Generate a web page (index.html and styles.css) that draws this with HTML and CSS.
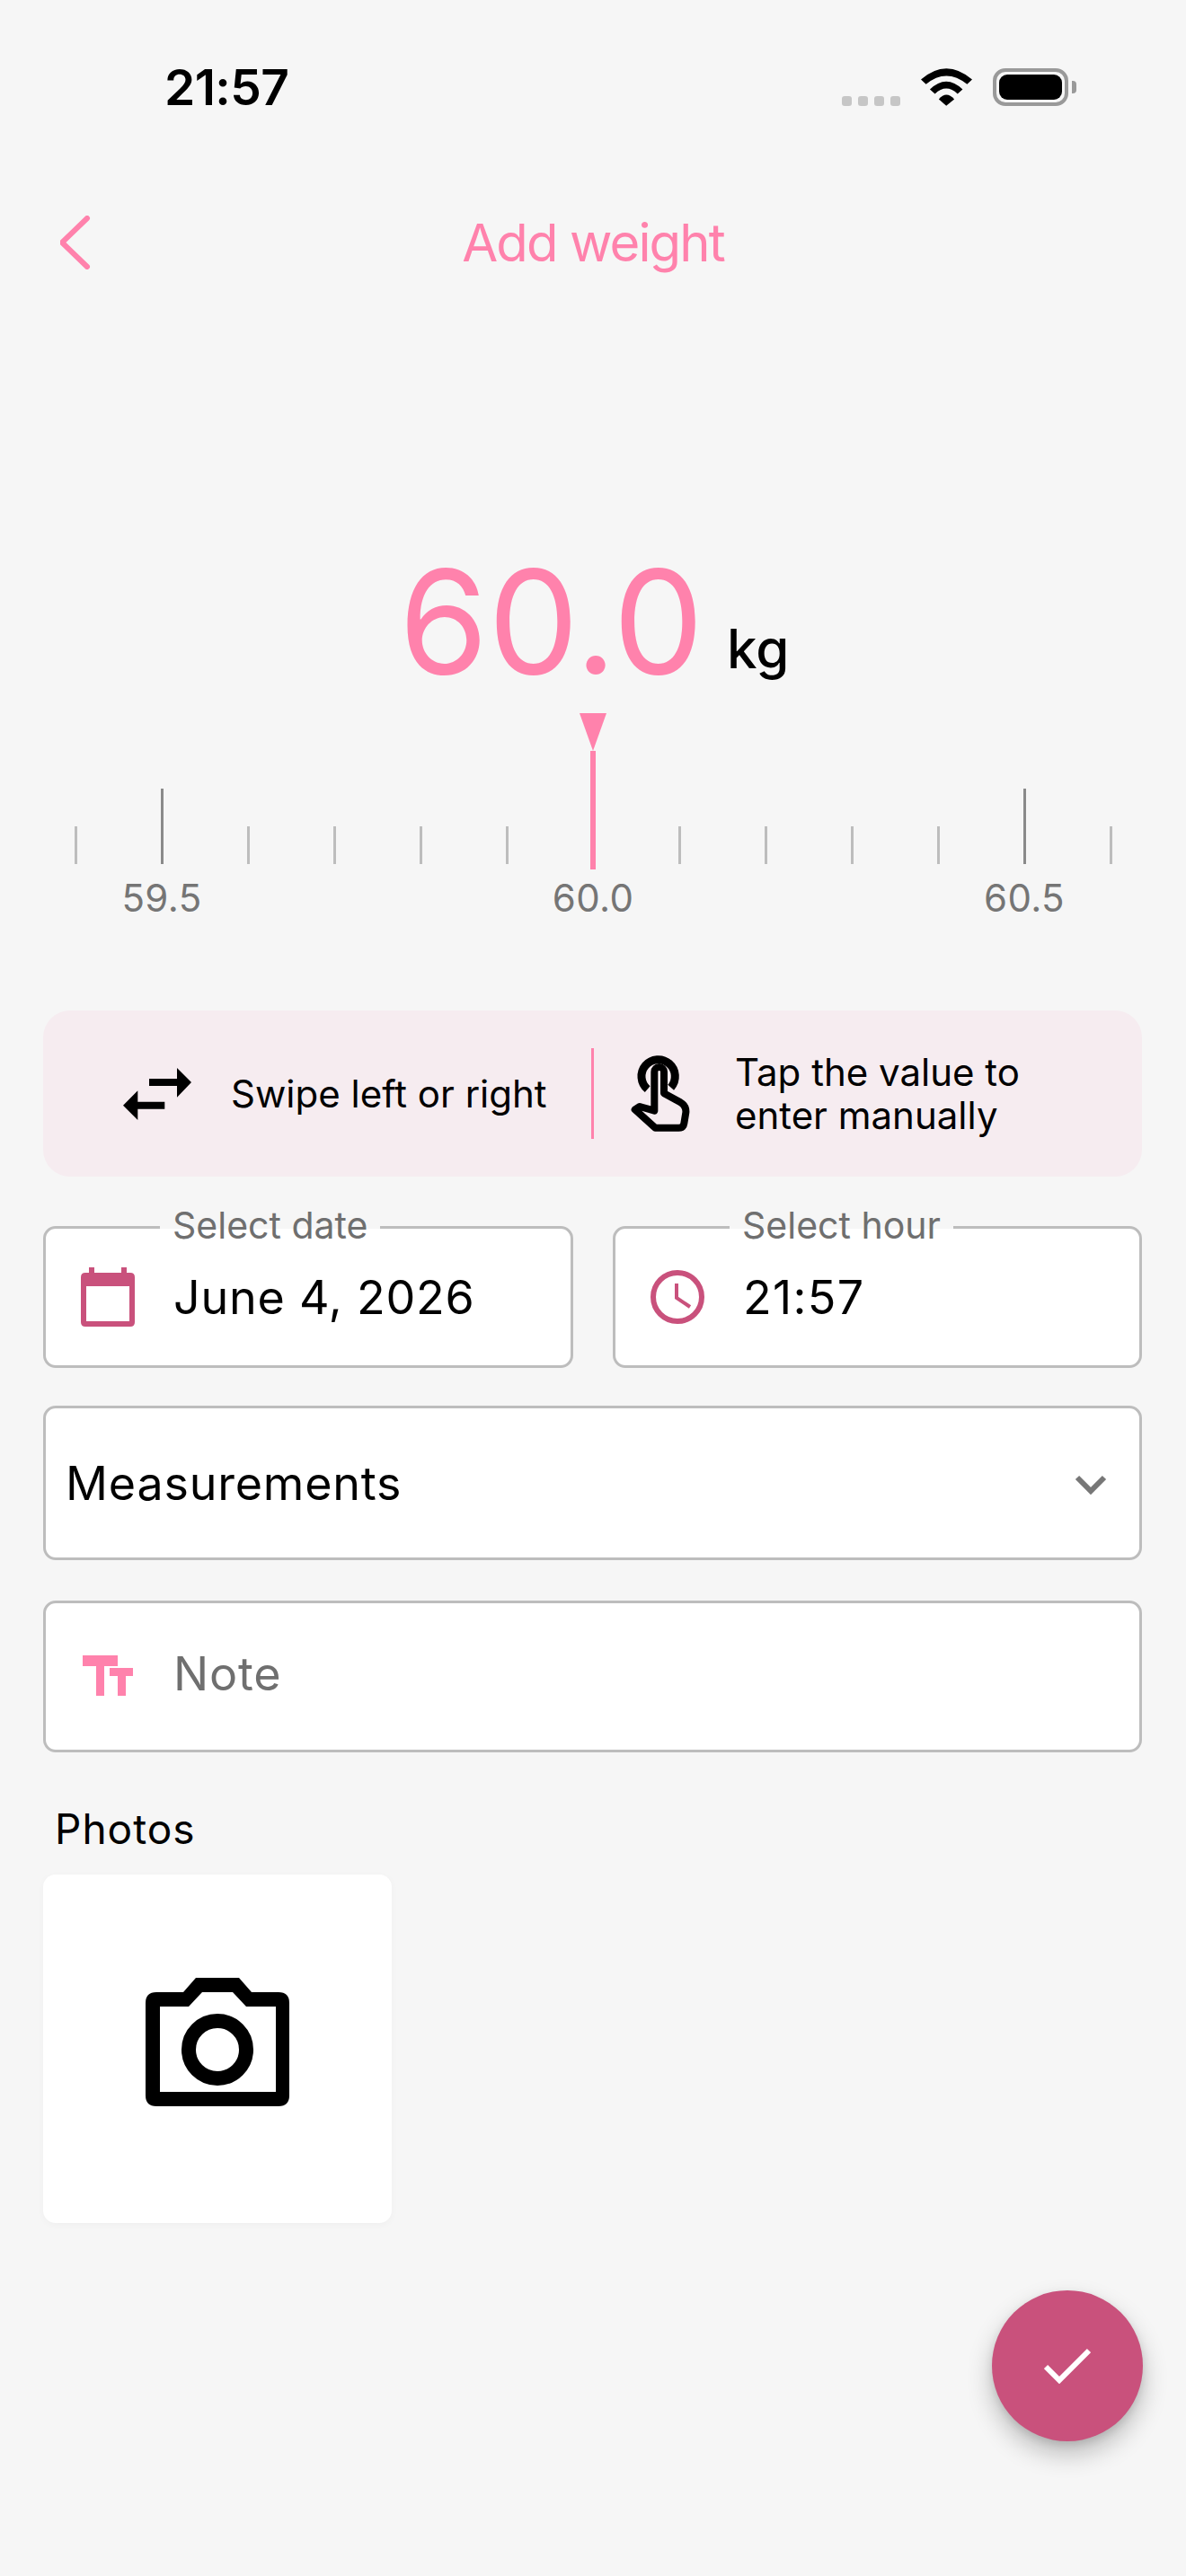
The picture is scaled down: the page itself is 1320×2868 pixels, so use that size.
FILE: index.html
```html
<!DOCTYPE html>
<html lang="en">
<head>
<meta charset="utf-8">
<title>Add weight</title>
<link rel="stylesheet" href="styles.css">
</head>
<body>
<div class="screen">
  <header class="status">
    <span class="clock">21:57</span>
    <div class="status-icons">
      <div class="signal"><i></i><i></i><i></i><i></i></div>
      <svg class="wifi" viewBox="375 75 172 125"><path d="M375 112Q460 38 547 112L530 128Q460 72 392 128Z"/><path d="M405 145Q460 92 515 145L498 160Q460 124 422 160Z"/><path d="M435 178Q460 148 487 178L460 200Z"/></svg>
      <div class="battery"><div class="battery-fill"></div></div>
      <div class="battery-nub"></div>
    </div>
  </header>

  <nav class="nav">
    <svg class="back" viewBox="0 0 34 60"><path d="M30 3 2 30 30 57"/></svg>
    <h1 class="title">Add weight</h1>
    <span></span>
  </nav>

  <section class="reading">
    <span class="value">60.0</span>
    <span class="unit">kg</span>
  </section>
  <div class="pointer"></div>
  <section class="ruler">
    <i class="tick"></i><i class="tick major"></i><i class="tick"></i><i class="tick"></i><i class="tick"></i><i class="tick"></i><i class="tick current"></i><i class="tick"></i><i class="tick"></i><i class="tick"></i><i class="tick"></i><i class="tick major"></i><i class="tick"></i>
    <span class="ruler-label col-2">59.5</span>
    <span class="ruler-label col-7">60.0</span>
    <span class="ruler-label col-12">60.5</span>
  </section>

  <main class="form">
    <div class="tips">
      <div class="tip tip-swipe">
        <svg class="icon-swap" viewBox="0 0 76 60"><path d="M29 13H60V1L76 17 60 33.7V21H29Z"/><path d="M0 42.7 16.3 26.3V38.7H46.3V46.7H16.3V59Z"/></svg>
        <span>Swipe left or right</span>
      </div>
      <div class="tip tip-tap">
        <svg class="icon-tap" viewBox="60 30 210 270"><path class="tap-ring" d="M122 158A56 56 0 1 1 200 152"/><path class="tap-hand" d="M145 230V100A16 16 0 0 1 177 100V172L232 202Q252 214 250 236L244 272Q242 287 226 287H148L80 226 96 216Z"/></svg>
        <span>Tap the value to<br>enter manually</span>
      </div>
    </div>

    <div class="pickers">
      <div class="field picker picker-date">
        <span class="legend">Select date</span>
        <svg class="icon-cal" viewBox="0 0 60 66"><path fill-rule="evenodd" d="M9 0H15V6H45V0H51V6H55Q60 6 60 11V61Q60 66 55 66H5Q0 66 0 61V11Q0 6 5 6H9ZM6 21V60H54V21Z"/></svg>
        <span class="field-text">June 4, 2026</span>
      </div>
      <div class="field picker picker-hour">
        <span class="legend">Select hour</span>
        <svg class="icon-clock" viewBox="0 0 60 60"><circle cx="30" cy="30" r="27"/><path d="M29 15V31L44 41"/></svg>
        <span class="field-text">21:57</span>
      </div>
    </div>

    <div class="field select">
      <span class="field-text">Measurements</span>
      <svg class="icon-down" viewBox="0 0 36 24"><path d="M3 4 18 19 33 4"/></svg>
    </div>

    <div class="field note">
      <svg class="icon-tt" viewBox="0 0 56 45"><path d="M0 0H39V12H24V45H15V12H0Z"/><path d="M30 14H56V23H48V45H39V23H30Z"/></svg>
      <span class="field-text placeholder">Note</span>
    </div>

    <h2 class="photos-title">Photos</h2>
    <button class="photo-tile" type="button">
      <svg class="icon-camera" viewBox="0 0 160 143"><path fill-rule="evenodd" d="M42 16 56 0H104L118 16H148Q160 16 160 28V131Q160 143 148 143H12Q0 143 0 131V28Q0 16 12 16ZM16 32V127H145V32H112L97 16H63L48 32Z"/><circle cx="80" cy="80" r="32"/></svg>
    </button>
  </main>

  <button class="fab" type="button">
    <svg class="icon-check" viewBox="0 0 52 40"><path d="M2 21 17 36 50 3"/></svg>
  </button>
</div>
</body>
</html>
```
FILE: styles.css
```css
* { box-sizing: border-box; }
html, body { margin: 0; padding: 0; }
body {
  background: #f6f6f6;
  font-family: Inter, "Liberation Sans", sans-serif;
  color: #000;
}
.screen { position: relative; width: 1320px; height: 2868px; overflow: hidden; }

/* status bar */
.status {
  height: 195px;
  display: flex;
  align-items: center;
  justify-content: space-between;
  padding: 0 122px 0 183px;
}
.clock { font-size: 55px; font-weight: 600; letter-spacing: -.6px; line-height: 1; }
.status-icons { display: flex; align-items: flex-end; height: 42px; margin-top: -2px; }
.signal { display: flex; gap: 7px; margin-right: 23px; }
.signal i { display: block; width: 11px; height: 11px; border-radius: 3px; background: #c6c6c6; }
.wifi { width: 57px; height: 42px; margin-right: 23px; fill: #000; }
.battery {
  width: 84px; height: 42px;
  border: 4px solid #999;
  border-radius: 14px;
  padding: 3px;
}
.battery-fill { width: 100%; height: 100%; background: #000; border-radius: 9px; }
.battery-nub { width: 5px; height: 14px; margin: 0 0 14px 4px; background: #999; border-radius: 0 4px 4px 0; }

/* nav */
.nav {
  height: 150px;
  display: grid;
  grid-template-columns: 1fr auto 1fr;
  align-items: center;
  padding: 0 67px;
}
.back { width: 34px; height: 60px; fill: none; stroke: #ff82ac; stroke-width: 6; stroke-linecap: round; stroke-linejoin: round; }
.title { margin: 0; font-size: 58px; font-weight: 400; letter-spacing: -1.9px; color: #ff82ac; line-height: 1; }

/* reading */
.reading {
  display: flex;
  align-items: flex-start;
  padding-left: 444px;
  margin-top: 267px;
  height: 160px;
}
.value { font-size: 160px; font-weight: 400; line-height: 160px; color: #ff82ac; }
.unit { font-size: 60px; font-weight: 500; line-height: 72px; margin: 74px 0 0 26px; }

.pointer {
  width: 30px; height: 42px;
  margin: 22px auto 0;
  background: #ff82ac;
  clip-path: polygon(0 0, 100% 0, 50% 100%);
}

/* ruler */
.ruler {
  display: grid;
  grid-template-columns: repeat(13, 96px);
  grid-template-rows: 132px auto;
  justify-content: center;
}
.tick { grid-row: 1; justify-self: center; align-self: start; width: 3px; height: 42px; margin-top: 84px; background: #bdbdbd; }
.tick.major { height: 84px; margin-top: 42px; background: #8a8a8a; }
.tick.current { width: 6px; height: 132px; margin-top: 0; background: #ff82ac; }
.ruler-label {
  grid-row: 2;
  justify-self: center;
  margin-top: 8px;
  font-size: 42px;
  line-height: 48px;
  letter-spacing: .4px;
  color: #757575;
}
.col-2 { grid-column: 2; }
.col-7 { grid-column: 7; }
.col-12 { grid-column: 12; }

/* form */
.form { padding: 0 49px 0 48px; margin-top: 101px; }
.tips {
  height: 185px;
  display: grid;
  grid-template-columns: 613px 1fr;
  align-items: center;
  background: #f6ecf0;
  border-radius: 30px;
}
.tip { display: flex; align-items: center; font-size: 42px; line-height: 48px; height: 101px; }
.tip span { margin-top: 1px; }
.tip-swipe { padding-left: 89px; border-right: 3px solid #ff82ac; }
.tip-tap { padding-left: 39px; }
.icon-swap { width: 76px; height: 60px; margin-right: 44px; fill: #000; }
.icon-tap { width: 70px; height: 90px; margin: -5px 48px 0 0; flex: none; }
.tap-ring, .tap-hand { fill: none; stroke: #000; stroke-width: 24; stroke-linejoin: round; }
.tap-ring { stroke-width: 27; }

.field {
  position: relative;
  display: flex;
  align-items: center;
  background: #fff;
  border: 3px solid #bdbdbd;
  border-radius: 14px;
}
.field-text { font-size: 52px; line-height: 60px; letter-spacing: .8px; }
.pickers { display: grid; grid-template-columns: 590px 589px; gap: 44px; margin-top: 55px; }
.picker { height: 158px; }
.legend {
  position: absolute;
  top: -26px;
  padding: 0 14px;
  font-size: 41px;
  line-height: 44px;
  color: #6f6f6f;
  background: linear-gradient(#f6f6f6 60%, #fff 60%);
}
.picker-date .legend { left: 127px; }
.picker-hour .legend { left: 127px; }
.icon-cal { width: 60px; height: 66px; margin: 0 0 0 39px; fill: #c9517c; flex: none; }
.icon-clock { width: 60px; height: 60px; margin: -1px 0 0 39px; fill: none; stroke: #c9517c; flex: none; }
.icon-clock circle { stroke-width: 6; }
.icon-clock path { stroke-width: 4; }
.picker .field-text { margin: 1px 0 0 43px; }
.picker-hour .field-text { letter-spacing: 1.3px; }

.select {
  height: 172px;
  margin-top: 42px;
  justify-content: space-between;
  padding: 0 36px 0 22px;
}
.select .field-text { margin-top: 2px; }
.icon-down { width: 36px; height: 24px; margin-top: 4px; fill: none; stroke: #777; stroke-width: 6; }
.note { height: 169px; margin-top: 45px; }
.icon-tt { width: 56px; height: 45px; margin: -2px 0 0 41px; fill: #ff82ac; flex: none; }
.placeholder { margin: -5px 0 0 45px; color: #6f6f6f; }

.photos-title { margin: 0; padding: 57px 0 0 13px; font-size: 46px; font-weight: 400; line-height: 56px; letter-spacing: 1px; }
.photo-tile {
  display: flex;
  align-items: center;
  justify-content: center;
  width: 388px; height: 388px;
  margin-top: 23px;
  padding: 0 0 15px;
  border: 0;
  background: #fff;
  border-radius: 14px;
  box-shadow: 0 2px 8px rgba(0, 0, 0, .03);
}
.icon-camera { width: 160px; height: 143px; fill: #000; }
.icon-camera circle { fill: none; stroke: #000; stroke-width: 16; }

.fab {
  position: absolute;
  left: 1104px;
  top: 2550px;
  width: 168px; height: 168px;
  display: flex;
  align-items: center;
  justify-content: center;
  padding: 0;
  border: 0;
  border-radius: 50%;
  background: #c9517c;
  box-shadow: 0 14px 28px rgba(0, 0, 0, .24), 0 4px 10px rgba(0, 0, 0, .1);
}
.icon-check { width: 52px; height: 40px; fill: none; stroke: #fff; stroke-width: 6; }
```
